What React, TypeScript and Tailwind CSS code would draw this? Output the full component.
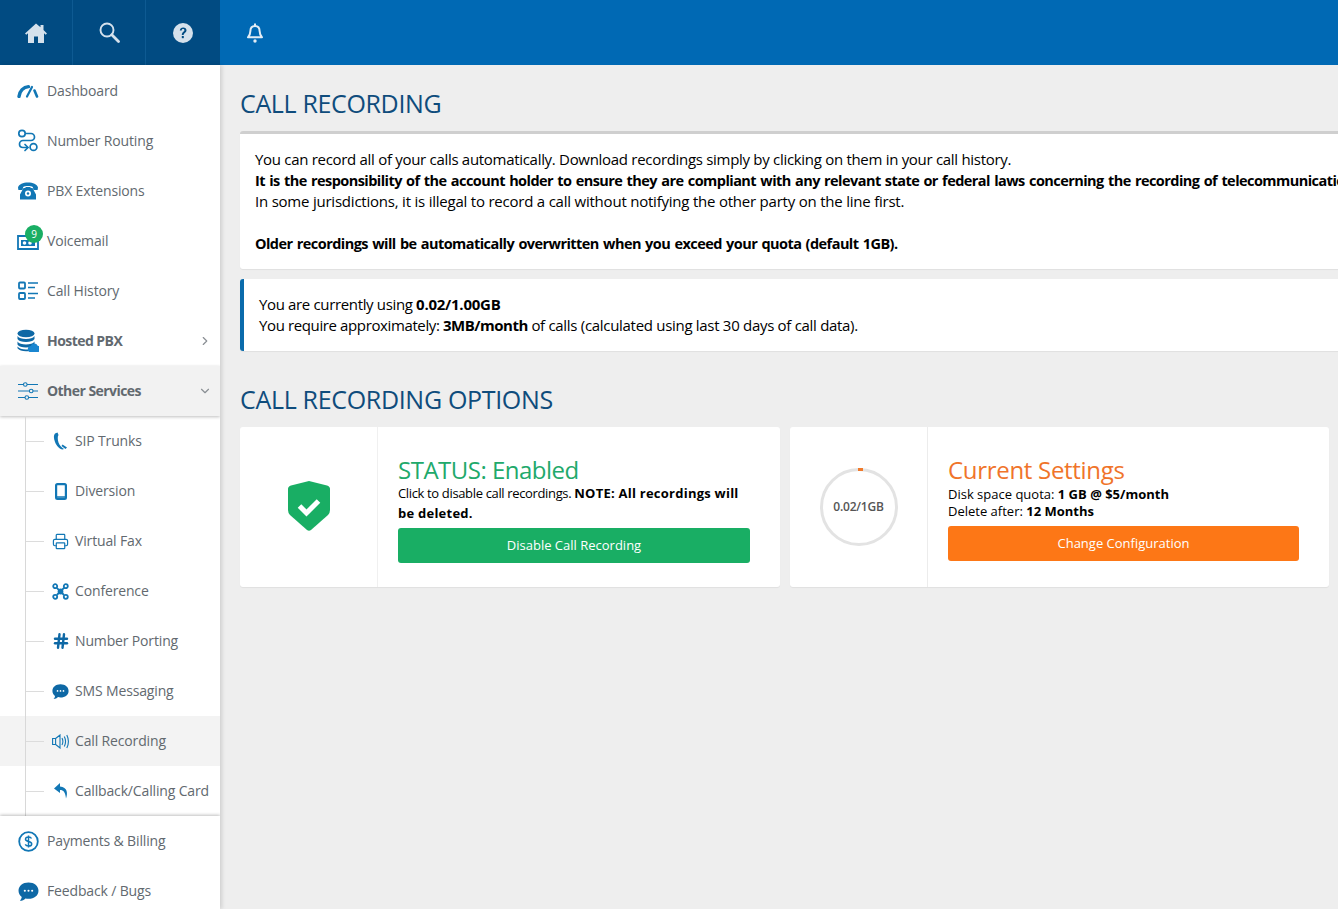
import React from "react";
import { ChevronRight, ChevronDown, Printer, Hash } from "lucide-react";

const B = "#1277b5";

const Gauge = () => (
  <svg width="22" height="14" viewBox="0 0 22 14" fill="none"><path d="M2 12.500C2.500 7 6.500 3 11.500 2.600" stroke={B} strokeWidth="3.400" strokeLinecap="round"/><path d="M10 12.500 15 3" stroke={B} strokeWidth="2.200" strokeLinecap="round"/><path d="M17.500 6.500 20 12.500" stroke={B} strokeWidth="2.600" strokeLinecap="round"/></svg>
);
const Routing = () => (
  <svg width="22" height="24" viewBox="0 0 22 24" fill="none" stroke={B} strokeWidth="1.700"><circle cx="5" cy="4.500" r="3.200"/><circle cx="16.500" cy="18" r="3.400"/><path d="M8.500 4.500H14a3.500 3.500 0 0 1 0 7H6a3.500 3.500 0 0 0-3.500 3.500c0 2 1.500 3.500 3.500 3.500H11"/><path d="M8 15.500l3 3-3 3" strokeLinecap="round"/></svg>
);
const Phone = () => (
  <svg width="20" height="18" viewBox="0 0 20 18" fill={B}><path d="M0 5.500C1 2 5 .5 10 .5s9 1.500 10 5l-.4 2.500h-4.100l-.7-3c-1-.7-2.800-1-4.800-1s-3.800.3-4.800 1L4.500 8H.4z"/><path d="M5.500 6h2V5h5v1h2l3.500 6.500V17.500H2V12.500z"/><circle cx="10" cy="11.500" r="3" fill="#fff"/><circle cx="10" cy="11.500" r="1.200"/></svg>
);
const Mail = () => (
  <svg width="22" height="18" viewBox="0 0 22 18" fill="none"><path d="M1 4h20v13H1z" stroke={B} strokeWidth="1.800"/><path d="M4 8h14v6H4z" fill={B}/><circle cx="7.500" cy="11" r="1.800" fill="#fff"/><circle cx="13" cy="11" r="1.800" fill="#fff"/></svg>
);
const History = () => (
  <svg width="21" height="20" viewBox="0 0 21 20" fill="none" stroke={B} strokeWidth="1.800"><rect x="1" y="1.500" width="6" height="6" rx="1"/><rect x="1" y="12" width="6" height="6" rx="1"/><path d="M10 2h10M10 6.500h7M10 12.500h10M10 17h7" strokeWidth="1.700"/></svg>
);
const Db = () => (
  <svg width="22" height="24" viewBox="0 0 22 24"><ellipse cx="9" cy="4.500" rx="8.500" ry="3.800" fill="#0e68a5"/><path d="M.5 7c1.500 2.200 4.500 3 8.500 3s7-.8 8.500-3v3c-1.500 2.200-4.500 3-8.500 3s-7-.8-8.500-3z" fill="#0e68a5"/><path d="M.5 12.500c1.500 2.200 4.500 3 8.500 3s7-.8 8.500-3v3c-1.500 2.200-4.500 3-8.500 3s-7-.8-8.500-3z" fill="#0e68a5"/><path d="M.5 17.500c1.500 2 4.500 3 8.500 3 1 0 2-.1 3-.2V22c-1 .1-2 .2-3 .2-4 0-7-1-8.500-3z" fill="#0e68a5"/><path d="M14 23a3 3 0 0 1-.3-6 3.800 3.800 0 0 1 7-.3 3.200 3.200 0 0 1 .3 6.300z" fill="#1a86d0"/></svg>
);
const Sliders = () => (
  <svg width="20" height="20" viewBox="0 0 20 20" fill="none" stroke={B} strokeWidth="1.100"><path d="M0 3.500h5.500M9 3.500h11M0 10h11.500M15 10h5M0 16.500h7M10.500 16.500H20"/><circle cx="7.300" cy="3.500" r="1.800"/><circle cx="13.200" cy="10" r="1.800"/><circle cx="8.800" cy="16.500" r="1.800"/></svg>
);
const Handset = () => (
  <svg width="15" height="18" viewBox="0 0 15 18" fill={B}><path d="M4.500.5 2 1.500C.5 3 .5 6 2 10s4.500 7 7.500 7.500l1.500-.5c-2.500-1.500-4.500-3.500-5.500-6.500S4.500 4 5.500 3z"/><path d="m9.500 12.500 4.500 3-1.500 1.500-4-3z"/></svg>
);
const Mobile = () => (
  <svg width="12" height="17" viewBox="0 0 12 17" fill="none"><rect x="1.100" y="1.100" width="9.800" height="14.800" rx="1.400" stroke={B} strokeWidth="2.200"/><path d="M1 14h10" stroke={B} strokeWidth="1.500"/></svg>
);
const Conf = () => (
  <svg width="17" height="17" viewBox="0 0 17 17" fill="none" stroke={B} strokeWidth="1.800"><circle cx="3.200" cy="3.200" r="2"/><circle cx="13.800" cy="3.200" r="2"/><circle cx="3.200" cy="13.800" r="2"/><circle cx="13.800" cy="13.800" r="2"/><path d="M4.800 4.800 12 12M12 4.800 4.800 12"/><circle cx="8.500" cy="8.500" r="2" fill={B}/></svg>
);
const Bubble = ({ s, c }: { s: number; c: string }) => (
  <svg width={s} height={s} viewBox="0 0 20 20"><path d="M10 1.500c5.500 0 9.500 3.300 9.500 7.800S15.500 17 10 17c-1 0-2-.1-2.900-.4C5.800 18 4 18.800 1.800 18.800c1-1 1.600-2.200 1.800-3.600C1.700 13.800.5 11.700.5 9.300.5 4.800 4.500 1.500 10 1.500z" fill={c}/><circle cx="6.500" cy="9.300" r="1" fill="#fff"/><circle cx="10" cy="9.300" r="1" fill="#fff"/><circle cx="13.500" cy="9.300" r="1" fill="#fff"/></svg>
);
const Speaker = () => (
  <svg width="18" height="15" viewBox="0 0 18 15" fill="none" stroke={B} strokeWidth="1.100"><path d="M.6 4.500h3v6h-3zM3.600 4.500 8 1v13l-4.400-3.500z"/><path d="M10 4c1 2 1 5 0 7M12.300 2.500c1.500 3 1.500 7 0 10M14.800 1c2 4 2 9 0 13"/></svg>
);
const CallBack = () => (
  <svg width="14" height="16" viewBox="0 0 14 16" fill={B}><path d="M6 0 0 5.500l6 4.500V7c3.500 0 5.500 2.500 6 8.500 2-5 1.500-11.500-6-12z"/></svg>
);
const Dollar = () => (
  <svg width="21" height="21" viewBox="0 0 21 21" fill="none"><circle cx="10.500" cy="10.500" r="9.300" stroke={B} strokeWidth="1.800"/><path d="M13.500 7.500c-.5-1-1.600-1.500-3-1.500-1.700 0-3 .8-3 2.200 0 3 6.200 1.600 6.200 4.700 0 1.400-1.300 2.200-3.200 2.200-1.500 0-2.700-.6-3.200-1.700M10.500 4.500v12" stroke={B} strokeWidth="1.500"/></svg>
);
const Home = () => (
  <svg width="22" height="20" viewBox="0 0 22 20" fill="#d5e1ec"><path d="M11 .5 0 10.500l1.300 1.300L3 10.300V20h6v-6.500h4V20h6v-9.700l1.700 1.500 1.300-1.300L18.500 7V2h-3v2.300z"/></svg>
);
const SearchI = () => (
  <svg width="21" height="21" viewBox="0 0 21 21" fill="none" stroke="#d5e1ec"><circle cx="8" cy="8" r="6.500" strokeWidth="1.900"/><path d="m12.800 12.800 6.700 6.700" strokeWidth="2.800" strokeLinecap="round"/></svg>
);
const BellI = () => (
  <svg width="18" height="20" viewBox="0 0 18 20" fill="none" stroke="#e3edf5"><path d="M9 3C5.800 3 4.400 5.300 4.400 8c0 3-1 4.500-2.400 6.300h14C14.600 12.500 13.600 11 13.600 8 13.600 5.300 12.200 3 9 3z" strokeWidth="2" strokeLinejoin="round"/><path d="M9 .5V3" strokeWidth="2"/><circle cx="9" cy="18" r="1.700" fill="#e3edf5" stroke="none"/></svg>
);
const Help = () => (
  <svg width="20" height="20" viewBox="0 0 20 20"><circle cx="10" cy="10" r="10" fill="#d5e1ec"/><path d="M6.800 7.500C7 5.500 8.300 4.500 10.200 4.500c2 0 3.300 1.200 3.300 2.800 0 2.500-2.800 2.500-2.800 4.700H8.800c0-3 2.600-3.300 2.600-4.700 0-.7-.5-1.200-1.300-1.200s-1.300.5-1.400 1.400z" fill="#014b82"/><rect x="8.800" y="13" width="2" height="2.200" fill="#014b82"/></svg>
);
const Shield = () => (
  <svg width="42" height="50" viewBox="0 0 42 50" className="-mt-[2px]"><path d="M21 0 39 4.500q3 1 3 3.500V29q0 3-2 5L23 49q-2 1.500-4 0L2 34q-2-2-2-5V8q0-2.500 3-3.500z" fill="#19ae64"/><path d="m11.500 25 7 7 12-12" fill="none" stroke="#fff" strokeWidth="5"/></svg>
);

const rowText = "pb-[2px] text-[14px] text-[#62696f]";
const boldLine = "text-[14.5px] font-bold tracking-[-0.55px] [word-spacing:1px]";

function Row({ icon, label, bold, chev }: { icon: React.ReactNode; label: string; bold?: boolean; chev?: React.ReactNode }) {
  return (
    <div className="flex h-[50px] shrink-0 items-center">
      <div className="flex w-[47px] shrink-0 items-center justify-center pl-[9px]">{icon}</div>
      <span className={`${rowText} ${bold ? "font-bold tracking-[-0.55px]" : "tracking-[-0.15px]"}`}>{label}</span>
      {chev && <div className="ml-auto pr-[8px]">{chev}</div>}
    </div>
  );
}

function Sub({ icon, label, active }: { icon: React.ReactNode; label: string; active?: boolean }) {
  return (
    <div className={`flex h-[50px] shrink-0 items-center ${active ? "bg-[#f3f3f3]" : ""}`}>
      <div className="ml-[25px] h-px w-[19px] shrink-0 bg-[#dcdcdc]" />
      <div className="flex w-[31px] shrink-0 items-center justify-center pl-[2px]">{icon}</div>
      <span className={`${rowText} whitespace-nowrap tracking-[-0.15px]`}>{label}</span>
    </div>
  );
}

export default function App() {
  return (
    <div className="flex h-[909px] w-[1338px] flex-col overflow-hidden bg-[#eeeeee] font-['Open_Sans',sans-serif] text-black">
      <header className="flex h-[65px] shrink-0 bg-[#0069b4]">
        <div className="flex w-[220px] bg-[#014b82]">
          <div className="flex w-[73px] items-center justify-center border-r border-[#0e5a92]"><Home /></div>
          <div className="flex w-[73px] items-center justify-center border-r border-[#0e5a92]"><SearchI /></div>
          <div className="flex w-[74px] items-center justify-center"><Help /></div>
        </div>
        <div className="flex w-[70px] items-center justify-center"><BellI /></div>
      </header>
      <div className="flex min-h-0 flex-1">
        <aside className="relative z-10 flex w-[220px] shrink-0 flex-col overflow-hidden bg-white pt-px shadow-[2px_0_4px_rgba(0,0,0,0.13)]">
          <Row icon={<Gauge />} label="Dashboard" />
          <Row icon={<Routing />} label="Number Routing" />
          <Row icon={<Phone />} label="PBX Extensions" />
          <div className="relative shrink-0">
            <Row icon={<Mail />} label="Voicemail" />
            <div className="absolute left-[25px] top-[9px] flex h-[18px] w-[18px] items-center justify-center rounded-full bg-[#19ae64] text-[10px] text-white">9</div>
          </div>
          <Row icon={<History />} label="Call History" />
          <Row icon={<Db />} label="Hosted PBX" bold chev={<ChevronRight size={14} color="#8a8f94" />} />
          <div className="relative z-10 shrink-0 bg-[#f2f2f2] shadow-[0_1px_3px_rgba(0,0,0,0.25)]">
            <Row icon={<Sliders />} label="Other Services" bold chev={<ChevronDown size={14} color="#8a8f94" />} />
          </div>
          <div className="relative shrink-0">
            <div className="absolute bottom-0 left-[25px] top-0 z-10 w-px bg-[#d8d8d8]" />
            <Sub icon={<Handset />} label="SIP Trunks" />
            <Sub icon={<Mobile />} label="Diversion" />
            <Sub icon={<Printer size={17} color={B} strokeWidth={1.7} />} label="Virtual Fax" />
            <Sub icon={<Conf />} label="Conference" />
            <Sub icon={<Hash size={18} color="#0e68a5" strokeWidth={3.2} />} label="Number Porting" />
            <Sub icon={<Bubble s={17} c="#0e68a5" />} label="SMS Messaging" />
            <Sub icon={<Speaker />} label="Call Recording" active />
            <Sub icon={<CallBack />} label="Callback/Calling Card" />
          </div>
          <div className="relative z-10 shrink-0 bg-white shadow-[0_-1px_3px_rgba(0,0,0,0.25)]">
            <Row icon={<Dollar />} label="Payments & Billing" />
            <Row icon={<Bubble s={21} c="#0e68a5" />} label="Feedback / Bugs" />
          </div>
        </aside>
        <main className="min-w-0 flex-1 overflow-hidden pl-5 pt-[21px]">
          <h1 className="-mt-px h-[36px] text-[25px] leading-[36px] tracking-[-0.35px] text-[#0f4c7c]">CALL RECORDING</h1>
          <section className="mt-[10px] w-[1140px] rounded-[3px] border-t-[3px] border-[#cfcfcf] bg-white px-[15px] pb-[15px] pt-[15px] text-[15px] leading-[21px] tracking-[-0.3px] whitespace-nowrap shadow-[0_1px_1px_rgba(0,0,0,0.06)]">
            <p>You can record all of your calls automatically. Download recordings simply by clicking on them in your call history.</p>
            <p className={boldLine}>It is the responsibility of the account holder to ensure they are compliant with any relevant state or federal laws concerning the recording of telecommunications.</p>
            <p className="tracking-[-0.22px]">In some jurisdictions, it is illegal to record a call without notifying the other party on the line first.</p>
            <p className={`mt-[21px] ${boldLine}`}>Older recordings will be automatically overwritten when you exceed your quota (default 1GB).</p>
          </section>
          <section className="mt-[10px] w-[1140px] rounded-[3px] border-l-4 border-[#0a6bab] bg-white px-[15px] py-[15px] text-[15px] leading-[21px] tracking-[-0.3px] whitespace-nowrap shadow-[0_1px_1px_rgba(0,0,0,0.06)]">
            <p><span className="tracking-[-0.35px]">You are currently using </span><b className="tracking-[-0.25px]">0.02/1.00GB</b></p>
            <p><span className="tracking-[-0.38px]">You require approximately: </span><b className="tracking-[-0.5px]">3MB/month</b> of calls (calculated using last 30 days of call data).</p>
          </section>
          <h2 className="mt-[30px] h-[36px] text-[25px] leading-[36px] tracking-[-0.32px] text-[#0f4c7c]">CALL RECORDING OPTIONS</h2>
          <div className="mt-[10px] flex w-[1089px] gap-[10px]">
            <div className="flex h-[160px] w-[540px] rounded-[3px] bg-white shadow-[0_1px_1px_rgba(0,0,0,0.06)]">
              <div className="flex w-[138px] shrink-0 items-center justify-center border-r border-[#f0f0f0]"><Shield /></div>
              <div className="box-content flex w-[352px] flex-col pl-[20px] pt-[30px]">
                <div className="text-[24px] leading-[26px] tracking-[-0.5px] text-[#21a96b]">STATUS: Enabled</div>
                <p className="text-[13px] leading-[20px] tracking-[-0.35px]">Click to disable call recordings. <b className="tracking-[0.24px]">NOTE: All recordings will be deleted.</b></p>
                <button className="mt-[5px] h-[35px] w-[352px] rounded-[3px] bg-[#19ae64] text-[13px] text-white">Disable Call Recording</button>
              </div>
            </div>
            <div className="flex h-[160px] w-[539px] rounded-[3px] bg-white shadow-[0_1px_1px_rgba(0,0,0,0.06)]">
              <div className="flex w-[138px] shrink-0 items-center justify-center border-r border-[#ececec]">
                <div className="relative flex h-[78px] w-[78px] items-center justify-center rounded-full border-[3px] border-[#e3e3e3] text-[12px] font-semibold tracking-[-0.2px] text-[#555]">
                  <div className="absolute left-[35px] top-[-3px] h-[3px] w-[5px] bg-[#f07a2b]" />
                  0.02/1GB
                </div>
              </div>
              <div className="flex flex-col pl-[20px] pt-[27px]">
                <div className="text-[24px] leading-[32px] tracking-[-0.3px] text-[#f0742a]">Current Settings</div>
                <p className="text-[13px] leading-[17px]">Disk space quota: <b>1 GB @ $5/month</b></p>
                <p className="text-[13px] leading-[17px]">Delete after: <b>12 Months</b></p>
                <button className="mt-[6px] h-[35px] w-[351px] rounded-[3px] bg-[#fd7716] text-[13px] text-white">Change Configuration</button>
              </div>
            </div>
          </div>
        </main>
      </div>
    </div>
  );
}
